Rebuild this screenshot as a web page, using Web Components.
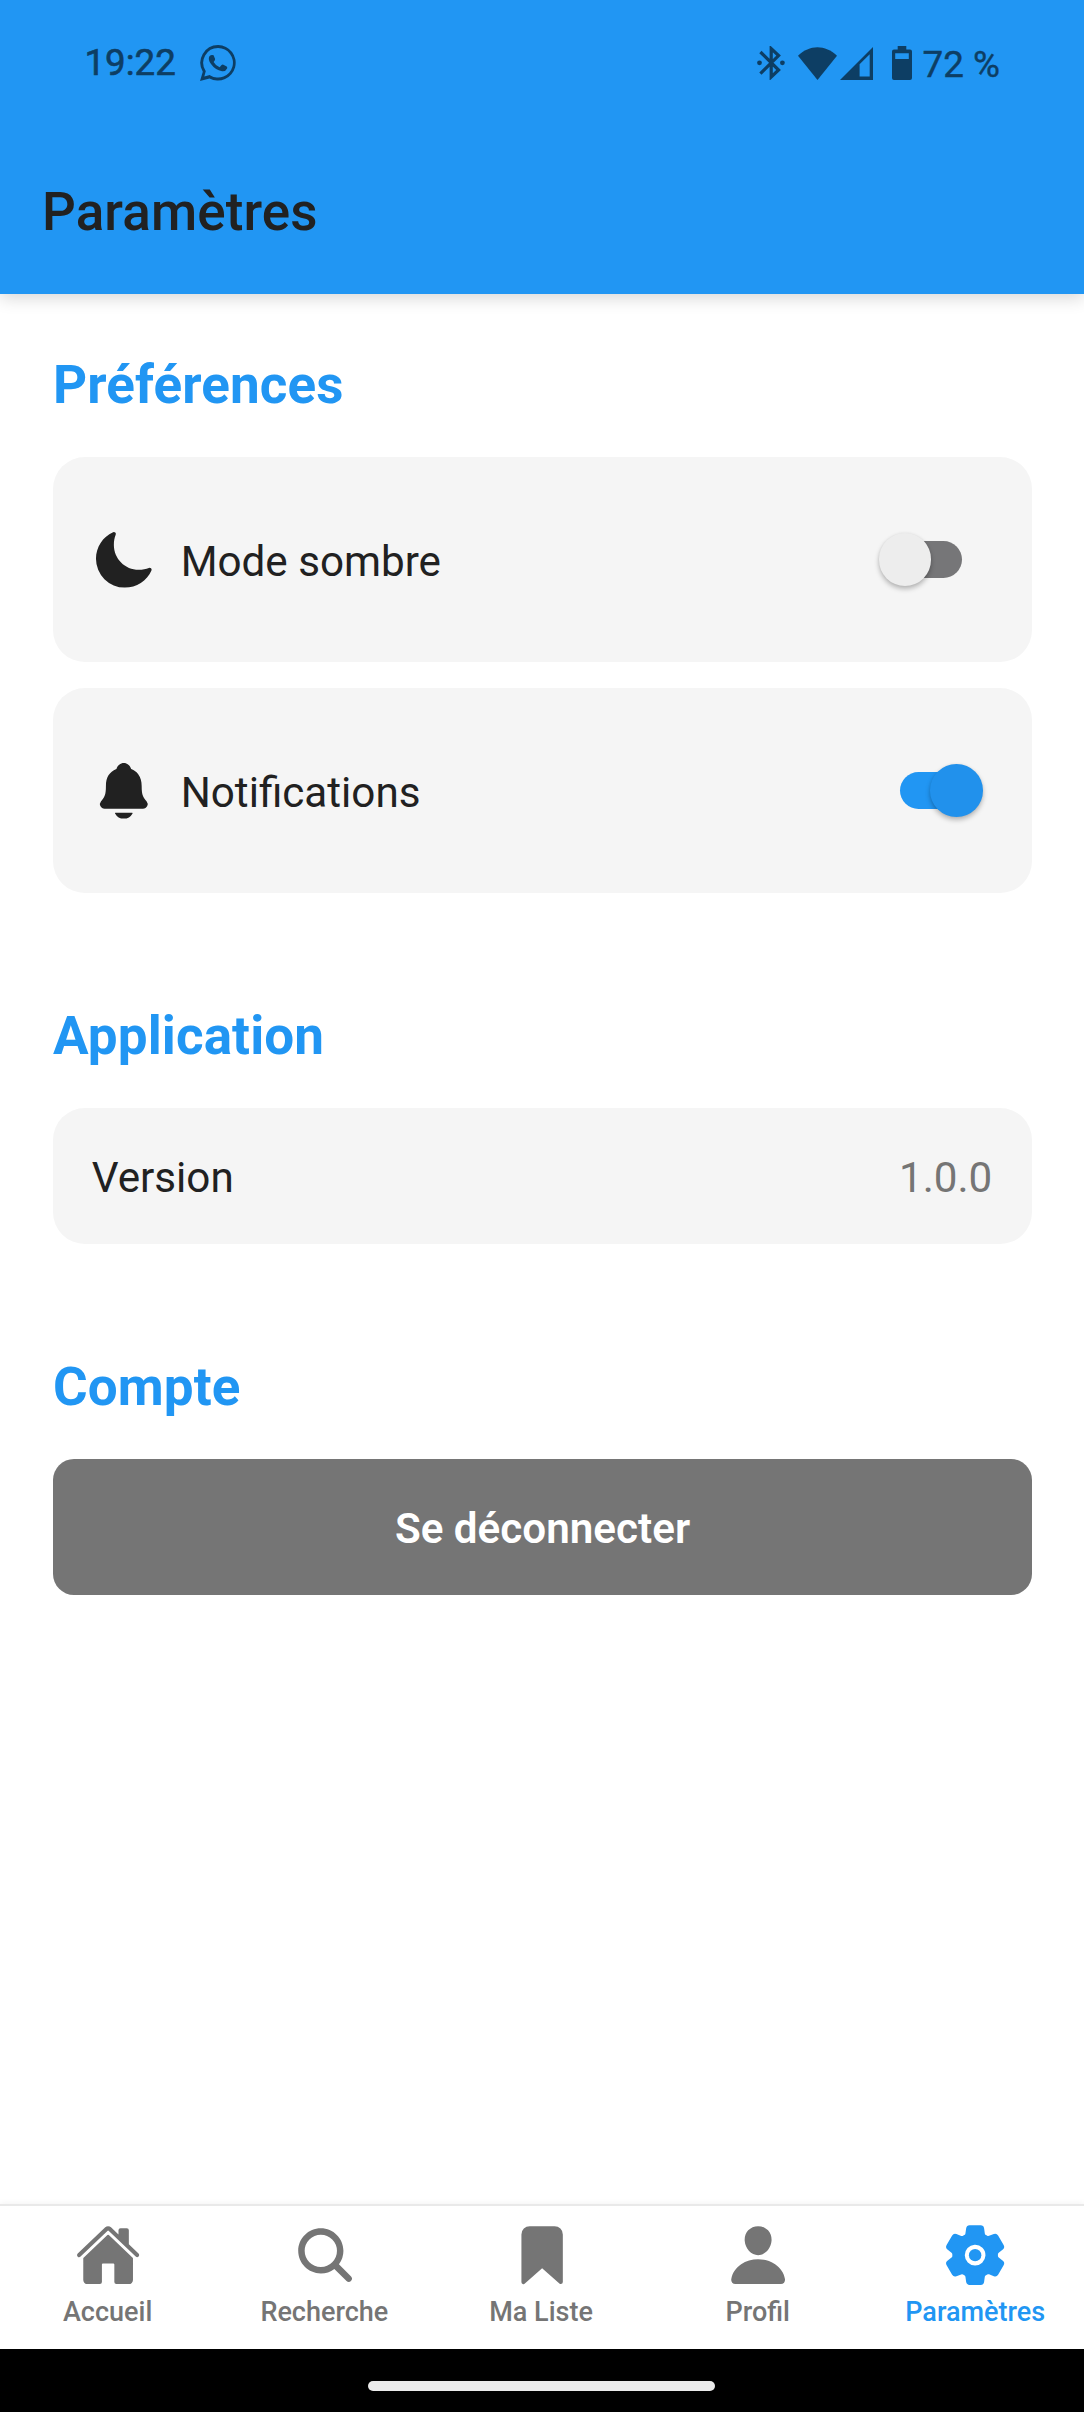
<!DOCTYPE html>
<html lang="fr">
<head>
<meta charset="utf-8">
<title>Paramètres</title>
<style>
  body { margin: 0; background: #fff; font-family: Roboto, "Liberation Sans", sans-serif; color: #212121; }
</style>
</head>
<body>
<settings-screen></settings-screen>

<script>
const define = (name, html, setup) => {
  const template = document.createElement('template');
  template.innerHTML = html;
  customElements.define(name, class extends HTMLElement {
    connectedCallback() {
      if (this.shadowRoot) return;
      this.attachShadow({ mode: 'open' }).appendChild(template.content.cloneNode(true));
      if (setup) setup(this, this.shadowRoot);
    }
  });
};

const ICONS = {
  moon: '<path d="M264 480A232 232 0 0132 248c0-94 54-178.28 137.61-214.67a16 16 0 0121.06 21.06C181.07 76.43 176 104.66 176 136c0 110.28 89.72 200 200 200 31.34 0 59.57-5.07 81.61-14.67a16 16 0 0121.06 21.06C442.28 426 358 480 264 480z"/>',
  bell: '<path d="M440.08 341.31c-1.66-2-3.29-4-4.89-5.93-22-26.61-35.31-42.67-35.31-118 0-39-9.33-71-27.72-95-13.56-17.73-31.89-31.18-56.05-41.12a3 3 0 01-.82-.67C306.6 51.49 282.82 32 256 32s-50.59 19.49-59.28 48.56a3.13 3.13 0 01-.81.65c-56.38 23.21-83.78 67.74-83.78 136.14 0 75.36-13.29 91.42-35.31 118-1.6 1.93-3.23 3.89-4.89 5.93a35.16 35.16 0 00-4.65 37.62c6.17 13 19.32 21.07 34.33 21.07H410.5c14.94 0 28-8.06 34.19-21a35.17 35.17 0 00-4.61-37.66zM256 480a80.06 80.06 0 0070.44-42.13 4 4 0 00-3.54-5.87H189.12a4 4 0 00-3.55 5.87A80.06 80.06 0 00256 480z"/>',
  home: '<path d="M261.56 101.28a8 8 0 00-11.06 0L66.4 277.15a8 8 0 00-2.47 5.79L63.9 448a32 32 0 0032 32H192a16 16 0 0016-16V328a8 8 0 018-8h80a8 8 0 018 8v136a16 16 0 0016 16h96.06a32 32 0 0032-32V282.94a8 8 0 00-2.47-5.79z"/><path d="M490.91 244.15l-74.8-71.56V64a16 16 0 00-16-16h-48a16 16 0 00-16 16v32l-57.92-55.38C272.77 35.14 264.71 32 256 32c-8.68 0-16.72 3.14-22.14 8.63l-212.7 203.5c-6.22 6-7 15.87-1.34 22.37A16 16 0 0043 267.56L250.5 69.28a8 8 0 0111.06 0l207.52 198.28a16 16 0 0022.59-.44c6.14-6.36 5.63-16.86-.76-22.97z"/>',
  search: '<path d="M456.69 421.39L362.6 327.3a173.81 173.81 0 0034.84-104.58C397.44 126.38 319.06 48 222.72 48S48 126.38 48 222.72s78.38 174.72 174.72 174.72A173.81 173.81 0 00327.3 362.6l94.09 94.09a25 25 0 0035.3-35.3zM97.92 222.72a124.8 124.8 0 11124.8 124.8 124.95 124.95 0 01-124.8-124.8z"/>',
  bookmark: '<path d="M400 480a16 16 0 01-10.63-4L256 357.41 122.63 476A16 16 0 0196 464V96a64.07 64.07 0 0164-64h192a64.07 64.07 0 0164 64v368a16 16 0 01-16 16z"/>',
  person: '<path d="M332.64 64.58C313.18 43.57 286 32 256 32c-30.16 0-57.43 11.5-76.8 32.38-19.58 21.11-29.12 49.8-26.88 80.78C156.76 206.28 203.27 256 256 256s99.16-49.71 103.67-110.82c2.27-30.7-7.33-59.33-27.03-80.6zM432 480H80a31 31 0 01-24.2-11.13c-6.5-7.77-9.12-18.38-7.18-29.11C57.06 392.94 83.4 353.61 124.8 326c36.78-24.51 83.37-38 131.2-38s94.42 13.5 131.2 38c41.4 27.6 67.74 66.93 76.18 113.75 1.94 10.73-.68 21.34-7.18 29.11A31 31 0 01432 480z"/>',
  gear: '<circle cx="256" cy="256" r="48"/><path d="M470.39 300l-.47-.38-31.56-24.75a16.11 16.11 0 01-6.1-13.33v-11.56a16 16 0 016.11-13.22L469.92 212l.47-.38a26.68 26.68 0 005.9-34.06l-42.71-73.9a1.59 1.59 0 01-.13-.22A26.86 26.86 0 00401 92.14l-.35.13-37.1 14.93a15.94 15.94 0 01-14.47-1.29q-4.92-3.1-10-5.86a15.94 15.94 0 01-8.19-11.82l-5.59-39.59-.12-.72A27.22 27.22 0 00298.76 26h-85.52a26.92 26.92 0 00-26.45 22.39l-.09.56-5.57 39.67a16 16 0 01-8.13 11.82 175.21 175.21 0 00-10 5.82 15.92 15.92 0 01-14.43 1.27l-37.13-15-.35-.14a26.87 26.87 0 00-32.48 11.34l-.13.22-42.77 73.95a26.71 26.71 0 005.9 34.1l.47.38 31.56 24.75a16.11 16.11 0 016.1 13.33v11.56a16 16 0 01-6.11 13.22L42.08 300l-.47.38a26.68 26.68 0 00-5.9 34.06l42.71 73.9a1.59 1.59 0 01.13.22 26.86 26.86 0 0032.45 11.3l.35-.13 37.07-14.93a15.94 15.94 0 0114.47 1.29q4.92 3.11 10 5.86a15.94 15.94 0 018.19 11.82l5.56 39.59.12.72A27.22 27.22 0 00213.24 486h85.52a26.92 26.92 0 0026.45-22.39l.09-.56 5.57-39.67a16 16 0 018.18-11.82c3.42-1.84 6.76-3.79 10-5.82a15.92 15.92 0 0114.43-1.27l37.13 14.95.35.14a26.85 26.85 0 0032.48-11.34 2.53 2.53 0 01.13-.22l42.71-73.89a26.7 26.7 0 00-5.89-34.11zm-134.48-40.24a80 80 0 11-83.66-83.67 80.21 80.21 0 0183.66 83.67z"/>'
};

define('app-icon', `
  <style>
    :host { display: block; flex: none; width: var(--icon-size, 63.6px); height: var(--icon-size, 63.6px); }
    svg { display: block; width: 100%; height: 100%; fill: currentColor; }
  </style>
  <svg viewBox="0 0 512 512" aria-hidden="true"></svg>`,
  (el, root) => { root.querySelector('svg').innerHTML = ICONS[el.getAttribute('name')]; });

define('status-bar', `
  <style>
    :host { display: flex; align-items: center; justify-content: space-between; height: 126px; padding: 0 84px 0 84px; box-sizing: border-box; color: #0d3e64; }
    .left, .right { display: flex; align-items: center; }
    .time { font-size: 36.7px; -webkit-text-stroke: .6px currentColor; width: 115.5px; padding-left: .5px; box-sizing: border-box; margin-top: -1px; }
    .battery { font-size: 36.8px; -webkit-text-stroke: .4px currentColor; padding-top: 3px; margin-left: 11px; white-space: nowrap; }
    svg { display: block; fill: currentColor; }
    .wifi { margin-left: 13px; }
    .signal { margin-left: 3px; }
    .cell { margin-left: 19px; margin-top: -1px; }
  </style>
  <div class="left">
    <span class="time">19:22</span>
    <svg width="36" height="36" viewBox="0 0 36 36"><path fill-rule="evenodd" d="M18.2 0A17.8 17.8 0 0 0 2.8 26.8L0 36l9.5-2.5A17.8 17.8 0 1 0 18.2 0zm0 3a14.8 14.8 0 1 1-7.8 27.4l-.6-.3-5.5 1.4 1.5-5.4-.4-.6A14.8 14.8 0 0 1 18.2 3z"/><path d="M9.4 11.2q1.8-1.7 4.2-.9l1.5 3.7q.3 1-1.5 3q2 3.7 6 5.2l2-2.2q.8-.8 1.8-.3l3.3 1.7q.9.5.4 2q-1.4 3.1-5 2.8q-6.9-1-11.1-7.1q-3.4-4.8-1.6-7.9z"/></svg>
  </div>
  <div class="right">
    <svg width="28" height="34" viewBox="0 0 28 34"><circle cx="2.5" cy="16.8" r="2.4"/><circle cx="25.4" cy="16.8" r="2.4"/><path fill="none" stroke="currentColor" stroke-width="3.2" d="M3.4 6 L21.6 24 L14.2 31 V2.6 L21.6 9.6 L3.4 27.6"/></svg>
    <svg class="wifi" width="39" height="33" viewBox="0 0 39 33"><path d="M0 8.8C11.5-2.6 27.3-2.6 39 8.8L19.5 33z"/></svg>
    <svg class="signal" width="33" height="33" viewBox="0 0 33 33"><path fill-rule="evenodd" d="M33 0V33H0zM19.6 17.2V29.4H29.7V7.3z"/></svg>
    <svg class="cell" width="20" height="34" viewBox="0 0 20 34"><path fill-rule="evenodd" d="M5.7 0h8.6v3.6H18a2 2 0 0 1 2 2V32a2 2 0 0 1-2 2H2a2 2 0 0 1-2-2V5.6a2 2 0 0 1 2-2h3.7zM3.2 7.3v5.8h13.6V7.3z"/></svg>
    <span class="battery">72&nbsp;%</span>
  </div>`);

define('app-header', `
  <style>
    :host { display: block; flex: none; height: 294px; background: #2196f3; box-shadow: 0 4px 16px rgba(0,0,0,.16); }
    h1 { margin: 0; padding: 4px 42px 0; height: 168px; box-sizing: border-box; display: flex; align-items: center; font-size: 53px; font-weight: 500; letter-spacing: .1px; }
  </style>
  <status-bar></status-bar>
  <h1><slot></slot></h1>`);

define('settings-section', `
  <style>
    :host { display: block; }
    h2 { margin: 0 0 41px; font-size: 53px; line-height: 62px; font-weight: 700; letter-spacing: .1px; color: #2196f3; }
    .items { display: flex; flex-direction: column; gap: 26px; }
  </style>
  <h2></h2>
  <div class="items"><slot></slot></div>`,
  (el, root) => { root.querySelector('h2').textContent = el.getAttribute('heading'); });

define('settings-row', `
  <style>
    :host { display: flex; align-items: center; height: 136px; box-sizing: border-box; padding: 0 39.7px 0 38.7px; background: #f5f5f5; border-radius: 32px; font-size: 42.2px; line-height: 56px; }
    :host([tall]) { height: 205px; }
    .label { padding-top: 3px; }
    :host([tall]) .label { padding: 4px 0 0 25.4px; }
    .value { margin-left: auto; padding-top: 3px; color: #757575; }
    :host([tall]) .value { padding: 0; }
  </style>
  <slot name="icon"></slot>
  <span class="label"><slot></slot></span>
  <span class="value"><slot name="value"></slot></span>`);

define('toggle-switch', `
  <style>
    :host { display: block; width: 83px; margin-right: 30.5px; }
    :host([on]) { margin-right: 9.5px; }
    .track { display: flex; align-items: center; height: 53px; }
    .line { flex: 1; height: 37px; border-radius: 0 18.5px 18.5px 0; background: #767678; margin-left: -26px; }
    .thumb { flex: none; width: 52.6px; height: 52.6px; border-radius: 50%; background: #ededed; box-shadow: 0 3px 5px rgba(0,0,0,.26), 0 0 3px rgba(0,0,0,.06); z-index: 1; }
    :host([on]) .track { flex-direction: row-reverse; }
    :host([on]) .line { background: #2196f3; border-radius: 18.5px 0 0 18.5px; margin: 0 -26px 0 0; }
    :host([on]) .thumb { background: #2191ec; }
  </style>
  <div class="track"><div class="thumb"></div><div class="line"></div></div>`);

define('action-button', `
  <style>
    :host { display: block; }
    button { display: block; width: 100%; height: 136px; padding: 3px 0 0; border: 0; border-radius: 21px; background: #757575; color: #fff; font: 600 42.2px/56px Roboto, "Liberation Sans", sans-serif; }
  </style>
  <button><slot></slot></button>`);

define('tab-item', `
  <style>
    :host { --icon-size: 66.25px; display: flex; flex-direction: column; align-items: center; flex: 1 1 0; padding-top: 16px; color: #757575; font-size: 27px; line-height: 32px; font-weight: 500; white-space: nowrap; }
    :host([active]) { color: #2196f3; }
    span { margin-top: 7.5px; padding-right: 1.5px; }
    :host([active]) span { padding-right: 0; }
  </style>
  <slot name="icon"></slot>
  <span><slot></slot></span>`);

define('tab-bar', `
  <style>
    :host { display: flex; flex: none; height: 145px; box-sizing: border-box; padding-right: .4px; border-top: 2px solid #e9e9e9; background: #fff; box-shadow: 0 -1px 6px rgba(0,0,0,.05); }
  </style>
  <slot></slot>`);

define('gesture-bar', `
  <style>
    :host { display: flex; flex: none; justify-content: center; align-items: flex-start; height: 63px; padding: 31.5px 1px 0 0; box-sizing: border-box; background: #000; z-index: 1; }
    div { width: 347px; height: 10.7px; border-radius: 6px; background: #ebebeb; }
  </style>
  <div></div>`);

define('settings-screen', `
  <style>
    :host { display: flex; flex-direction: column; height: 2412px; background: #fff; }
    main { flex: 1; display: flex; flex-direction: column; gap: 112px; padding: 60px 52px 0 53px; }
  </style>
  <app-header>Paramètres</app-header>
  <main>
    <settings-section heading="Préférences">
      <settings-row tall><app-icon slot="icon" name="moon"></app-icon>Mode sombre<toggle-switch slot="value"></toggle-switch></settings-row>
      <settings-row tall><app-icon slot="icon" name="bell"></app-icon>Notifications<toggle-switch slot="value" on></toggle-switch></settings-row>
    </settings-section>
    <settings-section heading="Application">
      <settings-row>Version<span slot="value">1.0.0</span></settings-row>
    </settings-section>
    <settings-section heading="Compte">
      <action-button>Se déconnecter</action-button>
    </settings-section>
  </main>
  <tab-bar>
    <tab-item><app-icon slot="icon" name="home"></app-icon>Accueil</tab-item>
    <tab-item><app-icon slot="icon" name="search"></app-icon>Recherche</tab-item>
    <tab-item><app-icon slot="icon" name="bookmark"></app-icon>Ma Liste</tab-item>
    <tab-item><app-icon slot="icon" name="person"></app-icon>Profil</tab-item>
    <tab-item active><app-icon slot="icon" name="gear"></app-icon>Paramètres</tab-item>
  </tab-bar>
  <gesture-bar></gesture-bar>`);
</script>
</body>
</html>
